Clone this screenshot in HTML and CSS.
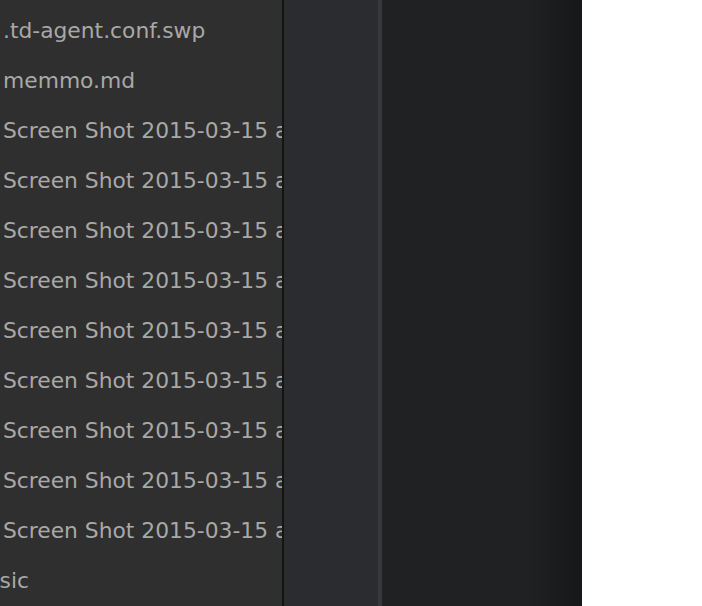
FILE: index.html
```html
<!DOCTYPE html>
<html>
<head>
<meta charset="utf-8">
<link rel="stylesheet" href="styles.css">
</head>
<body>
<div class="app">
  <div class="sidebar">
    <ul class="files">
      <li>.td-agent.conf.swp</li>
      <li>memmo.md</li>
      <li>Screen Shot 2015-03-15 at 10.00.00.png</li>
      <li>Screen Shot 2015-03-15 at 10.00.01.png</li>
      <li>Screen Shot 2015-03-15 at 10.00.02.png</li>
      <li>Screen Shot 2015-03-15 at 10.00.03.png</li>
      <li>Screen Shot 2015-03-15 at 10.00.04.png</li>
      <li>Screen Shot 2015-03-15 at 10.00.05.png</li>
      <li>Screen Shot 2015-03-15 at 10.00.06.png</li>
      <li>Screen Shot 2015-03-15 at 10.00.07.png</li>
      <li>Screen Shot 2015-03-15 at 10.00.08.png</li>
      <li class="shift">Music</li>
    </ul>
  </div>
  <div class="divider"></div>
  <div class="gutter"></div>
  <div class="stripe"></div>
  <div class="editor"></div>
  <div class="blank"></div>
</div>
</body>
</html>
```
FILE: styles.css
```css
html, body {
  margin: 0;
  padding: 0;
  height: 100%;
  overflow: hidden;
  background: #ffffff;
}
.app {
  display: flex;
  height: 606px;
}
.sidebar {
  width: 282px;
  flex: none;
  background: #2f2f2f;
  overflow: hidden;
}
.files {
  list-style: none;
  margin: 0;
  padding: 6px 0 0 0;
}
.files li {
  height: 50px;
  line-height: 50px;
  padding-left: 3px;
  white-space: nowrap;
  overflow: hidden;
  font-family: "DejaVu Sans", "Open Sans", sans-serif;
  font-size: 21.8px;
  color: #a8a8a8;
}
.files li.shift {
  text-indent: -36px;
}
.divider {
  width: 2px;
  flex: none;
  background: #141414;
}
.gutter {
  width: 94px;
  flex: none;
  background: #2b2c30;
}
.stripe {
  width: 4px;
  flex: none;
  background: #36383c;
}
.editor {
  width: 200px;
  flex: none;
  background: linear-gradient(to right, #202123 0%, #202123 72%, #161719 100%);
}
.blank {
  flex: 1;
  background: #ffffff;
}
```
